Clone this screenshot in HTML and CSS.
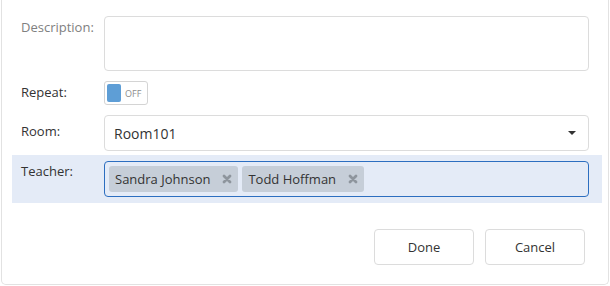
FILE: index.html
```html
<html>

<head>
  <title>Edit Event</title>
  <link rel="stylesheet" href="styles.css">
</head>

<body>
  <div class="dialog">
    <div class="form">
      <div class="row">
        <label class="label muted desc">Description:</label>
        <div class="field">
          <textarea class="textbox"></textarea>
        </div>
      </div>
      <div class="row">
        <label class="label repeat">Repeat:</label>
        <div class="field">
          <span class="switch"><span class="knob"></span><span class="switch-text">OFF</span></span>
        </div>
      </div>
      <div class="row">
        <label class="label room">Room:</label>
        <div class="field">
          <div class="select">
            <span>Room101</span>
            <span class="caret"></span>
          </div>
        </div>
      </div>
      <div class="row active">
        <label class="label teacher">Teacher:</label>
        <div class="field">
          <div class="multi">
            <span class="tag">Sandra Johnson
              <svg class="remove" width="10" height="10" viewBox="0 0 10 10"><path d="M2 2 L8 8 M8 2 L2 8" stroke="#8e959d" stroke-width="2.8" stroke-linecap="round"/></svg>
            </span>
            <span class="tag">Todd Hoffman
              <svg class="remove" width="10" height="10" viewBox="0 0 10 10"><path d="M2 2 L8 8 M8 2 L2 8" stroke="#8e959d" stroke-width="2.8" stroke-linecap="round"/></svg>
            </span>
          </div>
        </div>
      </div>
    </div>
    <div class="buttons">
      <button class="btn">Done</button>
      <button class="btn">Cancel</button>
    </div>
  </div>
</body>

</html>
```

FILE: styles.css
```css
* {
  box-sizing: border-box;
  font-family: 'Open Sans', 'Noto Sans', sans-serif;
}

body {
  margin: 0;
  background: white;
  font-size: 13px;
  color: #333;
}

.dialog {
  margin: 0 1px;
  height: 285px;
  border: 1px solid #e2e2e2;
  border-top: none;
  border-radius: 0 0 5px 5px;
  padding: 10px 6px 0 10px;
}

.row {
  display: flex;
  padding: 6px 13px 4px 9px;
}

.row.active {
  padding-bottom: 6px;
  background-color: #e4ebf7;
}

.label {
  width: 83px;
  line-height: 18px;
  color: #333;
}

.label.muted {
  color: #808080;
}

.desc {
  padding-top: 2px;
}

.repeat {
  padding-top: 2px;
}

.room {
  padding-top: 7px;
}

.teacher {
  padding-top: 1px;
}

.field {
  flex: 1;
}

.textbox {
  display: block;
  width: 100%;
  height: 55px;
  border: 1px solid #dcdcdc;
  border-radius: 4px;
  resize: none;
  outline: none;
}

.switch {
  display: flex;
  align-items: center;
  width: 44px;
  height: 24px;
  border: 1px solid #d4d4d4;
  border-radius: 3px;
  padding: 2px;
  background: white;
}

.knob {
  width: 14px;
  height: 18px;
  border-radius: 2px;
  background-color: #5e9ed6;
}

.switch-text {
  margin-left: 4px;
  font-size: 9px;
  color: #8c8c8c;
}

.select {
  display: flex;
  align-items: center;
  justify-content: space-between;
  height: 36px;
  padding: 0 12px 0 9px;
  border: 1px solid #dcdcdc;
  border-radius: 4px;
  background: white;
  font-size: 14px;
}

.caret {
  width: 0;
  height: 0;
  border-left: 4px solid transparent;
  border-right: 4px solid transparent;
  border-top: 4px solid #333;
}

.multi {
  display: flex;
  gap: 4px;
  height: 36px;
  padding: 4px;
  border: 1px solid #2c6ec0;
  border-radius: 4px;
}

.tag {
  display: flex;
  align-items: center;
  gap: 12px;
  height: 26px;
  padding: 0 6px;
  border-radius: 3px;
  background-color: #c6ced8;
  font-size: 13px;
  color: #333;
}

.buttons {
  display: flex;
  justify-content: flex-end;
  gap: 11px;
  padding: 26px 17px 0 0;
}

.btn {
  width: 100px;
  height: 36px;
  border: 1px solid #dcdcdc;
  border-radius: 4px;
  background: white;
  font-size: 13px;
  color: #333;
}
```
